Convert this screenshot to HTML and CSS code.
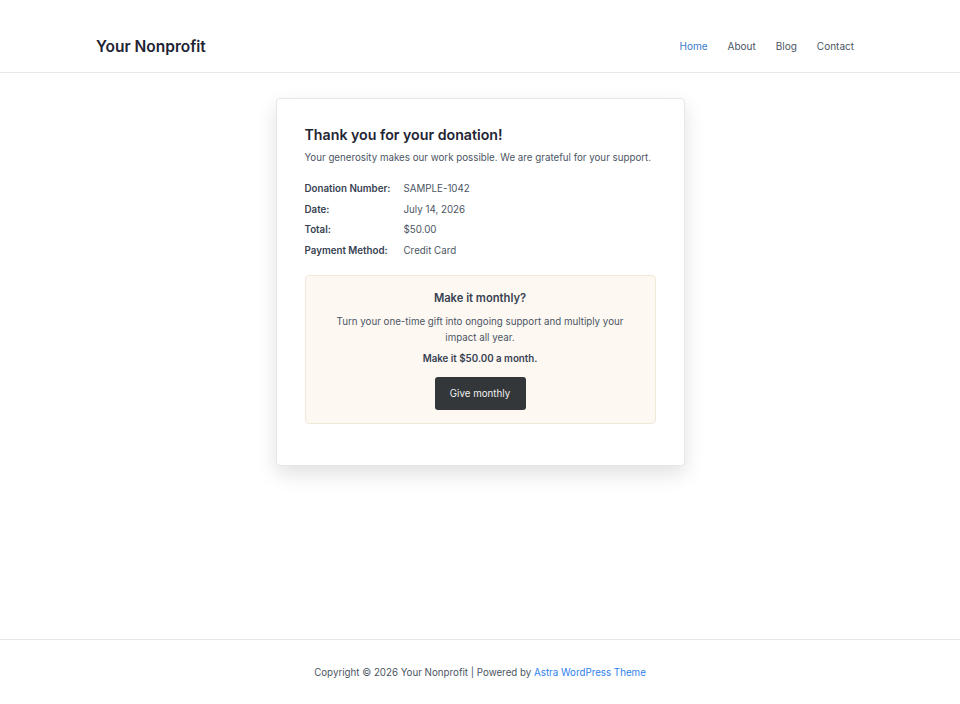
FILE: index.html
```html
<!DOCTYPE html>
<html lang="en">
<head>
<meta charset="utf-8">
<title>Thank you</title>
<link rel="stylesheet" href="styles.css">
</head>
<body>
<div class="page">
  <header class="site-header">
    <div class="header-inner">
      <div class="logo">Your Nonprofit</div>
      <nav class="nav">
        <a class="nav-link active" href="#">Home</a>
        <a class="nav-link" href="#">About</a>
        <a class="nav-link" href="#">Blog</a>
        <a class="nav-link" href="#">Contact</a>
      </nav>
    </div>
  </header>
  <main class="main">
    <section class="card">
      <h1 class="title">Thank you for your donation!</h1>
      <p class="lead">Your generosity makes our work possible. We are grateful for your support.</p>
      <dl class="details">
        <dt>Donation Number:</dt><dd>SAMPLE-1042</dd>
        <dt>Date:</dt><dd>July 14, 2026</dd>
        <dt>Total:</dt><dd>$50.00</dd>
        <dt>Payment Method:</dt><dd>Credit Card</dd>
      </dl>
      <div class="monthly">
        <h2 class="monthly-title">Make it monthly?</h2>
        <p class="monthly-text">Turn your one-time gift into ongoing support and multiply your impact all year.</p>
        <p class="monthly-amount">Make it $50.00 a month.</p>
        <button class="btn">Give monthly</button>
      </div>
    </section>
  </main>
  <footer class="site-footer">
    <p>Copyright © 2026 Your Nonprofit | Powered by <a href="#">Astra WordPress Theme</a></p>
  </footer>
</div>
</body>
</html>
```
FILE: styles.css
```css
* { box-sizing: border-box; }
html, body { margin: 0; padding: 0; }
body {
  font-family: Inter, "Liberation Sans", sans-serif;
  color: #4b5563;
  background: #fff;
  font-size: 9.75px;
}
.page {
  min-height: 704px;
  display: flex;
  flex-direction: column;
}
.site-header {
  height: 73px;
  border-bottom: 1px solid #e8e8e8;
}
.header-inner {
  height: 100%;
  padding: 20px 106px 0 96px;
  display: flex;
  align-items: center;
  justify-content: space-between;
}
.logo {
  font-size: 15.5px;
  font-weight: 600;
  color: #1e2433;
}
.nav { display: flex; gap: 20px; }
.nav-link {
  font-size: 10px;
  color: #4b5563;
  text-decoration: none;
}
.nav-link.active { color: #3a7bc8; }
.main {
  flex: 1;
  display: flex;
  justify-content: center;
  align-items: flex-start;
  padding-top: 25px;
}
.card {
  width: 409px;
  background: #fff;
  border: 1px solid #e5e7eb;
  border-radius: 4px;
  box-shadow: 0 8px 20px rgba(0,0,0,0.12);
  padding: 25px 28px 41px;
}
.title {
  margin: 0;
  font-size: 14.2px;
  font-weight: 600;
  color: #1e2433;
  line-height: 22px;
}
.lead {
  margin: 4px 0 0;
  font-size: 9.75px;
  line-height: 16px;
  color: #4b5563;
}
.details {
  margin: 15px 0 0;
  display: grid;
  grid-template-columns: 99px 1fr;
  row-gap: 4.5px;
  font-size: 9.75px;
  line-height: 16px;
}
.details dt { font-weight: 600; color: #374151; }
.details dd { margin: 0; color: #4b5563; }
.monthly {
  margin-top: 16px;
  background: #fdf8f2;
  border: 1px solid #f1e8da;
  border-radius: 4px;
  padding: 14px 20px 13px;
  text-align: center;
}
.monthly-title {
  margin: 0;
  font-size: 11.2px;
  font-weight: 600;
  color: #374151;
  line-height: 16px;
}
.monthly-text {
  margin: 8px auto 0;
  max-width: 300px;
  font-size: 9.75px;
  line-height: 16px;
  color: #4b5563;
}
.monthly-amount {
  margin: 5px 0 0;
  font-size: 9.75px;
  font-weight: 600;
  color: #374151;
  line-height: 16px;
}
.btn {
  margin-top: 10px;
  width: 91px;
  height: 33px;
  background: #33373a;
  color: #f1f1f1;
  border: 0;
  border-radius: 3px;
  font-family: inherit;
  font-size: 9.75px;
}
.site-footer {
  height: 65px;
  border-top: 1px solid #e5e7eb;
  display: flex;
  align-items: center;
  justify-content: center;
}
.site-footer p { margin: 0; font-size: 9.75px; color: #4b5563; }
.site-footer a { color: #2f80ed; text-decoration: none; }
```
